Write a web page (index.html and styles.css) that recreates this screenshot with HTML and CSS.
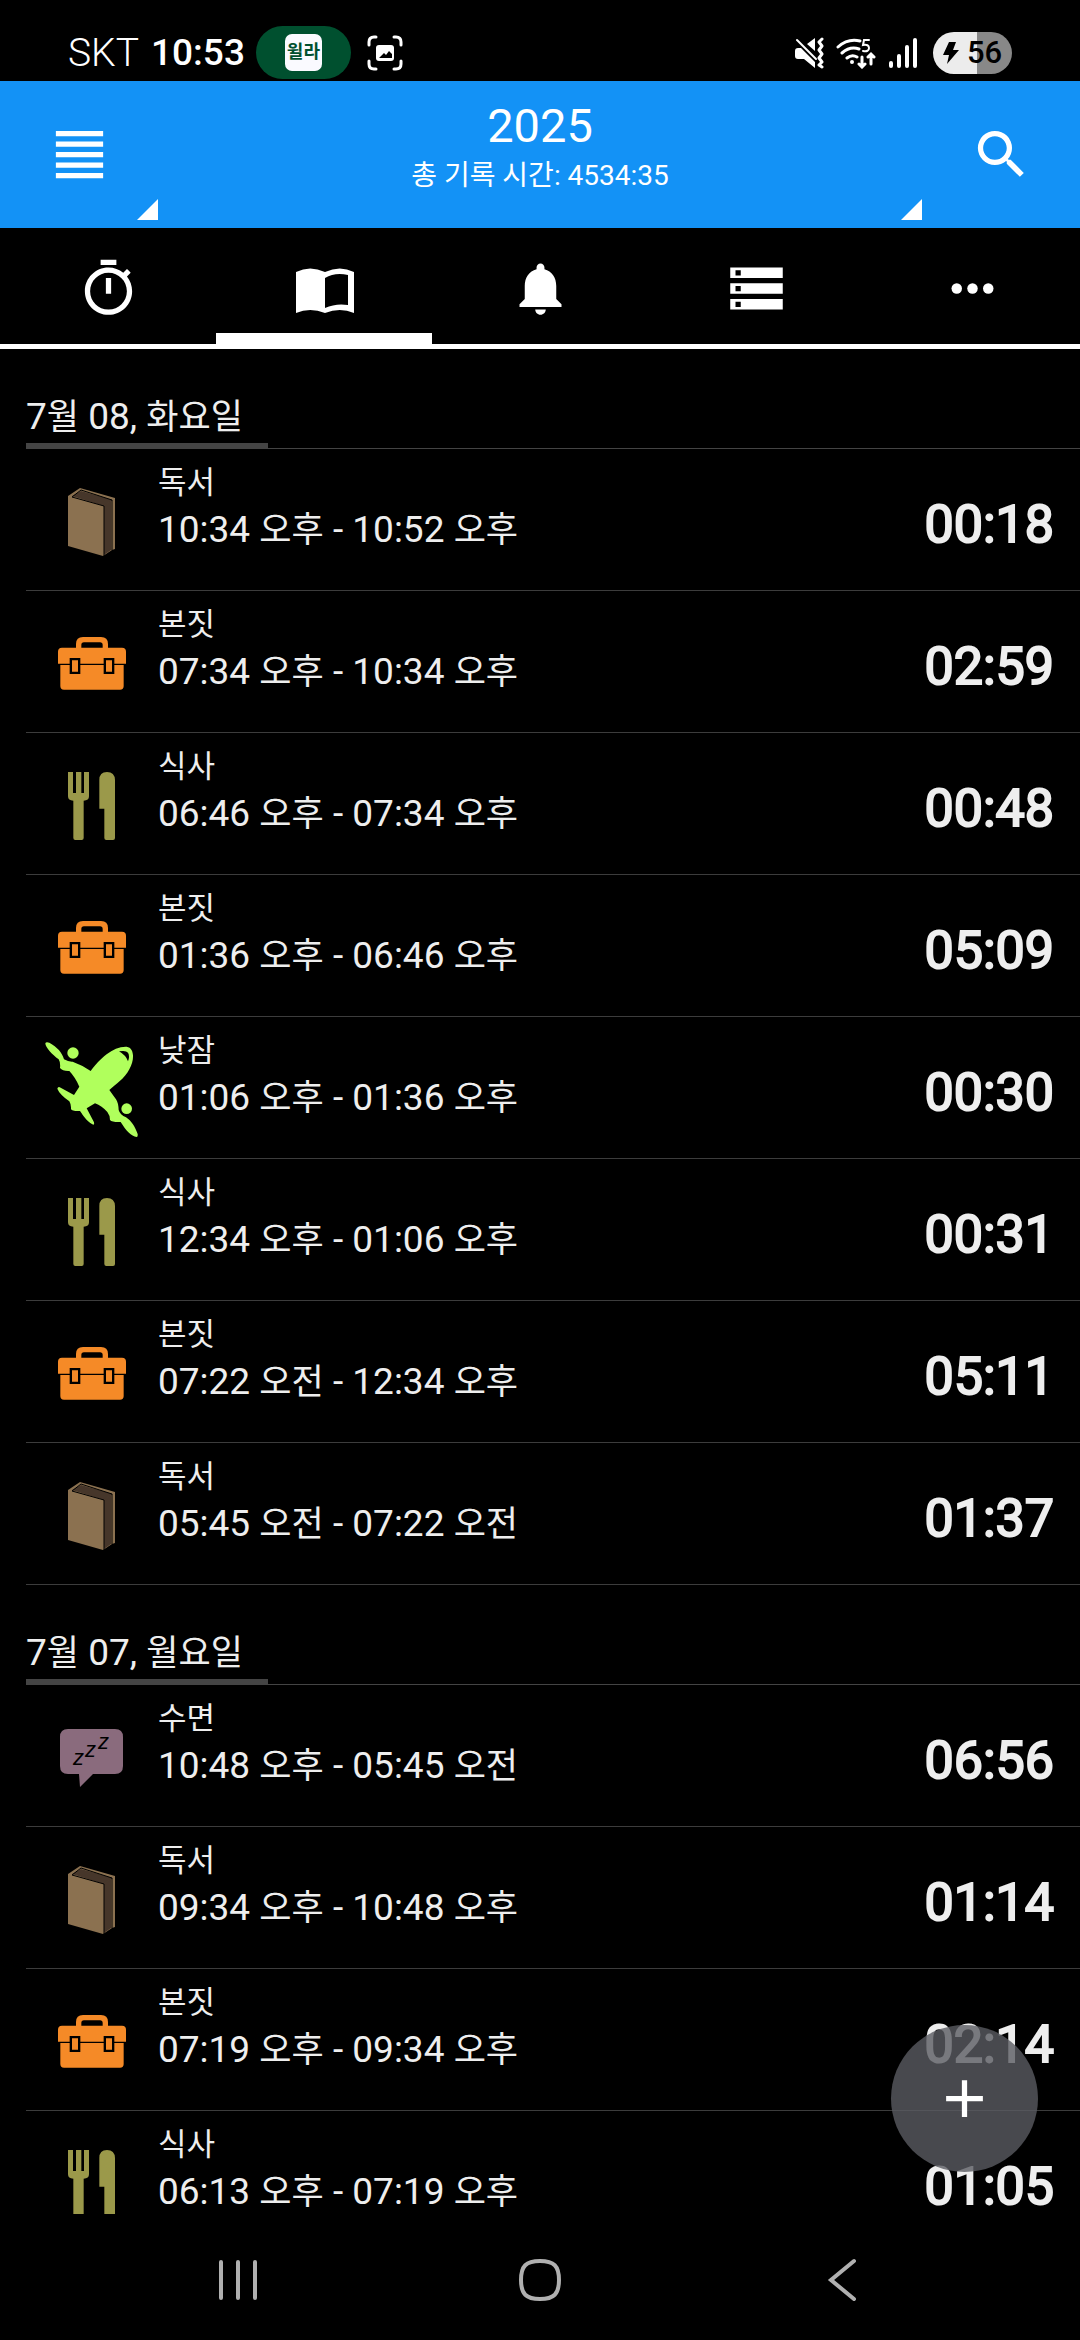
FILE: index.html
```html
<!DOCTYPE html>
<html lang="ko">
<head>
<meta charset="utf-8">
<meta name="viewport" content="width=device-width, initial-scale=1">
<title>2025</title>
<link rel="stylesheet" href="styles.css">
</head>
<body>
<svg class="sprite" aria-hidden="true">
  <symbol id="book" viewBox="0 0 96 96">
    <path fill="#8b7150" d="M24 22 36 14 71 24V75L68 76 59 82 24 72Z"/>
    <path fill="#46362a" d="M28 22 37 17 69 26 60 32Z"/>
    <path fill="#46362a" d="M60 31 67 27V76L60 81Z"/>
    <path fill="none" stroke="#000" stroke-width="1" d="M28 23 37 16 68 26V76M28 23 60 32V82"/>
  </symbol>
  <symbol id="toolbox" viewBox="72 78 288 288">
    <path fill="#f58a27" fill-rule="evenodd" d="M168 173V162Q168 141 189 141H243Q264 141 264 162V173H306Q318 173 318 185V221H114V185Q114 173 126 173ZM184 173H248V165Q248 157 240 157H192Q184 157 184 165Z"/>
    <path fill="#f58a27" d="M121 225H311V288Q311 299 300 299H132Q121 299 121 288Z"/>
    <path fill="#000" d="M149 204H181V252H149ZM251 204H283V252H251Z"/>
    <path fill="#f58a27" d="M156 211H174V245H156ZM258 211H276V245H258Z"/>
  </symbol>
  <symbol id="cutlery" viewBox="72 504 288 288">
    <path fill="#9b994a" d="M144 546H159V609H168V546H184V609H192V546H207V619Q207 632 191 632V744Q191 750 185 750H166Q160 750 160 744V632Q144 632 144 619Z"/>
    <path fill="#9b994a" d="M238 656V570Q238 546 261 546T285 570V744Q285 750 279 750H259Q253 750 253 744V656Z"/>
  </symbol>
  <symbol id="plane" viewBox="72 96 288 288">
    <path fill="#b0ff5c" d="M212 183C240 145 280 108 320 110C344 114 344 150 328 178C315 205 285 225 268 240L288 268Q295 278 296 300Q300 315 318 322C334 332 346 352 353 372Q354 381 350 381C334 379 318 362 302 336Q276 337 270 330Q270 316 262 306Q246 288 225 280L200 295L222 337Q224 347 217 343C200 333 190 318 180 303Q156 304 153 297Q154 284 148 274Q118 252 112 236Q114 228 122 233L162 255L178 230Q166 202 148 183Q128 184 120 174Q122 158 116 148C96 134 76 112 76 100Q78 94 88 98C112 112 126 126 132 148Q146 156 158 155Q184 164 212 183Z"/>
    <circle cx="159" cy="129" r="17" fill="#b0ff5c"/>
    <circle cx="320" cy="296" r="16" fill="#b0ff5c"/>
    <path fill="#000" d="M297 124Q318 120 324 128Q330 138 324 154Q318 136 297 124Z"/>
  </symbol>
</svg>

<div class="status">
  <div class="status-group">
    <span class="carrier">SKT</span>
    <time class="clock">10:53</time>
    <span class="pill"><span class="pill-app">윌라</span></span>
    <svg class="capture" viewBox="0 0 36 36" width="36" height="36" aria-hidden="true">
      <path fill="none" stroke="#fff" stroke-width="3" stroke-linecap="round" d="M2 10V7Q2 2 7 2H9M27 2H29Q34 2 34 7V10M34 26V29Q34 34 29 34H27M9 34H7Q2 34 2 29V26"/>
      <rect x="9" y="10" width="18" height="16" rx="3" fill="#fff"/>
      <path d="M12 23 17 18 19 20 22 16 25 19V23Z"/>
    </svg>
  </div>
  <div class="status-group status-right">
    <svg viewBox="0 0 30 32" width="30" height="32" aria-hidden="true">
      <path fill="#fff" d="M1 14Q1 11 4 11L7 11 21 25V31L10 22H4Q1 22 1 19ZM13 7 21 1V14Z"/>
      <path fill="none" stroke="#fff" stroke-width="2" stroke-linecap="round" d="M3 3 22 22"/>
      <path fill="none" stroke="#fff" stroke-width="3" stroke-linecap="round" stroke-linejoin="round" d="M28 2 25 5 28 9 25 13 28 17 25 21 28 25 25 28 28 30"/>
    </svg>
    <svg viewBox="0 0 40 32" width="40" height="32" aria-hidden="true">
      <g fill="none" stroke="#fff" stroke-width="3" stroke-linecap="round">
        <path d="M2 10Q12 1 24 4M6 16Q14 9 23 12M11 21Q16 17 21 20"/>
        <path stroke-width="2" d="M33 3H28L27 8Q33 7 33 11T27 14"/>
        <path d="M26 20V29M23 27 26 30 29 27M35 27V18M32 20 35 17 38 20"/>
      </g>
      <circle cx="16" cy="25" r="2" fill="#fff"/>
    </svg>
    <svg class="signal" viewBox="0 0 30 32" width="30" height="32" aria-hidden="true">
      <path fill="none" stroke="#fff" stroke-width="4" stroke-linecap="round" d="M3 26V29M11 19V29M19 10V29M27 3V29"/>
    </svg>
    <span class="battery">
      <svg viewBox="0 0 16 22" width="16" height="22" aria-hidden="true"><path d="M6 0H13L10 8H16L4 22 6 13H0Z"/></svg>56
    </span>
  </div>
</div>

<header class="appbar">
  <button class="bar-button corner" type="button" aria-label="메뉴">
    <svg class="icon" viewBox="0 0 24 24"><path d="M3 3h18v2H3zM3 7h18v2H3zM3 11h18v2H3zM3 15h18v2H3zM3 19h18v2H3z"/></svg>
  </button>
  <button class="period corner" type="button">
    <span class="period-title">2025</span>
    <span class="period-total">총 기록 시간: 4534:35</span>
  </button>
  <button class="bar-button" type="button" aria-label="검색">
    <svg class="icon" viewBox="0 0 24 24"><path d="M15.500 14h-.79l-.28-.27A6.470 6.470 0 0 0 16 9.500 6.500 6.500 0 1 0 9.500 16c1.610 0 3.090-.59 4.230-1.570l.27.28v.79l5 4.990L20.490 19l-4.990-5zm-6 0C7.010 14 5 11.990 5 9.500S7.010 5 9.500 5 14 7.010 14 9.500 11.990 14 9.500 14z"/></svg>
  </button>
</header>

<nav class="tabs">
  <button class="tab" type="button" aria-label="타이머"><svg class="icon" viewBox="0 0 24 24"><path d="M15 1H9v2h6V1zm-4 13h2V8h-2v6zm8.030-6.610l1.420-1.420c-.43-.51-.9-.99-1.410-1.410l-1.420 1.420C16.070 4.740 14.120 4 12 4c-4.970 0-9 4.030-9 9s4.020 9 9 9 9-4.030 9-9c0-2.120-.74-4.070-1.970-5.610zM12 20c-3.870 0-7-3.130-7-7s3.130-7 7-7 7 3.130 7 7-3.130 7-7 7z"/></svg></button>
  <button class="tab tab-active" type="button" aria-label="기록" aria-current="page"><svg class="icon" viewBox="0 0 63 63"><path fill-rule="evenodd" d="M3 15Q17 8 32 15 47 8 61 15V56Q47 50 32 56 17 50 3 56ZM32 21V51Q43 46 55 48V18Q42 15 32 21Z"/></svg></button>
  <button class="tab" type="button" aria-label="알림"><svg class="icon" viewBox="0 0 24 24"><path d="M12 22c1.100 0 2-.9 2-2h-4c0 1.100.89 2 2 2zm6-6v-5c0-3.070-1.640-5.640-4.500-6.320V4c0-.83-.67-1.500-1.500-1.500s-1.500.67-1.500 1.500v.68C7.630 5.360 6 7.920 6 11v5l-2 2v1h16v-1l-2-2z"/></svg></button>
  <button class="tab" type="button" aria-label="목록"><svg class="icon" viewBox="0 0 24 24"><path d="M2 20h20v-4H2v4zm2-3h2v2H4v-2zM2 4v4h20V4H2zm4 3H4V5h2v2zm-4 7h20v-4H2v4zm2-3h2v2H4v-2z"/></svg></button>
  <button class="tab" type="button" aria-label="더보기"><svg class="icon" viewBox="0 0 24 24"><circle cx="6" cy="12" r="2"/><circle cx="12" cy="12" r="2"/><circle cx="18" cy="12" r="2"/></svg></button>
</nav>

<main class="content">
  <div class="log">
    <section>
      <h2 class="day"><span class="day-label">7<span class="ko">월</span> 08, <span class="ko">화요일</span></span></h2>
      <ul class="entries">
        <li class="entry"><svg class="entry-icon"><use href="#book"/></svg><div class="entry-text"><p class="entry-name">독서</p><p class="entry-range">10:34 <span class="ko">오후</span> - 10:52 <span class="ko">오후</span></p></div><span class="duration">00:18</span></li>
        <li class="entry"><svg class="entry-icon"><use href="#toolbox"/></svg><div class="entry-text"><p class="entry-name">본짓</p><p class="entry-range">07:34 <span class="ko">오후</span> - 10:34 <span class="ko">오후</span></p></div><span class="duration">02:59</span></li>
        <li class="entry"><svg class="entry-icon"><use href="#cutlery"/></svg><div class="entry-text"><p class="entry-name">식사</p><p class="entry-range">06:46 <span class="ko">오후</span> - 07:34 <span class="ko">오후</span></p></div><span class="duration">00:48</span></li>
        <li class="entry"><svg class="entry-icon"><use href="#toolbox"/></svg><div class="entry-text"><p class="entry-name">본짓</p><p class="entry-range">01:36 <span class="ko">오후</span> - 06:46 <span class="ko">오후</span></p></div><span class="duration">05:09</span></li>
        <li class="entry"><svg class="entry-icon"><use href="#plane"/></svg><div class="entry-text"><p class="entry-name">낮잠</p><p class="entry-range">01:06 <span class="ko">오후</span> - 01:36 <span class="ko">오후</span></p></div><span class="duration">00:30</span></li>
        <li class="entry"><svg class="entry-icon"><use href="#cutlery"/></svg><div class="entry-text"><p class="entry-name">식사</p><p class="entry-range">12:34 <span class="ko">오후</span> - 01:06 <span class="ko">오후</span></p></div><span class="duration">00:31</span></li>
        <li class="entry"><svg class="entry-icon"><use href="#toolbox"/></svg><div class="entry-text"><p class="entry-name">본짓</p><p class="entry-range">07:22 <span class="ko">오전</span> - 12:34 <span class="ko">오후</span></p></div><span class="duration">05:11</span></li>
        <li class="entry"><svg class="entry-icon"><use href="#book"/></svg><div class="entry-text"><p class="entry-name">독서</p><p class="entry-range">05:45 <span class="ko">오전</span> - 07:22 <span class="ko">오전</span></p></div><span class="duration">01:37</span></li>
      </ul>
    </section>
    <section>
      <h2 class="day"><span class="day-label">7<span class="ko">월</span> 07, <span class="ko">월요일</span></span></h2>
      <ul class="entries">
        <li class="entry"><svg class="entry-icon" viewBox="0 0 96 96"><path fill="#8a6b7d" d="M24 19H71Q79 19 79 27V56Q79 64 71 64H49L36 77 35 64H24Q16 64 16 56V27Q16 19 24 19Z"/><g class="zzz"><text x="29" y="55">z</text><text x="41" y="47">z</text><text x="54" y="39">z</text></g></svg><div class="entry-text"><p class="entry-name">수면</p><p class="entry-range">10:48 <span class="ko">오후</span> - 05:45 <span class="ko">오전</span></p></div><span class="duration">06:56</span></li>
        <li class="entry"><svg class="entry-icon"><use href="#book"/></svg><div class="entry-text"><p class="entry-name">독서</p><p class="entry-range">09:34 <span class="ko">오후</span> - 10:48 <span class="ko">오후</span></p></div><span class="duration">01:14</span></li>
        <li class="entry"><svg class="entry-icon"><use href="#toolbox"/></svg><div class="entry-text"><p class="entry-name">본짓</p><p class="entry-range">07:19 <span class="ko">오후</span> - 09:34 <span class="ko">오후</span></p></div><span class="duration">02:14</span></li>
        <li class="entry"><svg class="entry-icon"><use href="#cutlery"/></svg><div class="entry-text"><p class="entry-name">식사</p><p class="entry-range">06:13 <span class="ko">오후</span> - 07:19 <span class="ko">오후</span></p></div><span class="duration">01:05</span></li>
      </ul>
    </section>
  </div>
  <button class="fab" type="button" aria-label="추가"><svg class="icon" viewBox="0 0 24 24"><path d="M19 13h-6v6h-2v-6H5v-2h6V5h2v6h6v2z"/></svg></button>
</main>

<nav class="sysnav">
  <button class="sysnav-button" type="button" aria-label="최근 앱"><svg viewBox="0 0 44 44"><path d="M5 4V40M22 4V40M39 4V40"/></svg></button>
  <button class="sysnav-button" type="button" aria-label="홈"><svg viewBox="0 0 44 44"><path d="M22 3C36 3 41 8 41 22S36 41 22 41 3 36 3 22 8 3 22 3Z"/></svg></button>
  <button class="sysnav-button" type="button" aria-label="뒤로"><svg viewBox="0 0 44 44"><path d="M34 3 11 22 34 41"/></svg></button>
</nav>
</body>
</html>
```

FILE: styles.css
```css
* {
  box-sizing: border-box;
}

body {
  margin: 0;
  height: 100vh;
  display: flex;
  flex-direction: column;
  background: #000;
  color: #eee;
  font-family: Roboto, "Noto Sans CJK KR", sans-serif;
}

button {
  margin: 0;
  padding: 0;
  border: 0;
  background: none;
  color: #fff;
  font: inherit;
}

h2,
p,
ul {
  margin: 0;
  padding: 0;
  font-weight: 400;
  list-style: none;
}

.sprite {
  position: absolute;
  width: 0;
  height: 0;
}

.zzz {
  font: italic 22px "Liberation Sans", sans-serif;
}

.icon {
  display: block;
  width: 63px;
  height: 63px;
  fill: #fff;
}

/* Hangul beside Latin digits, set a little smaller to even out the line */
.ko {
  font-size: 35px;
}

/* Status bar */
.status {
  flex: none;
  display: flex;
  justify-content: space-between;
  height: 81px;
  padding: 24px 68px 0;
  color: #fff;
}

.status-group {
  display: flex;
  align-items: center;
  height: 57px;
}

.carrier {
  font-size: 39px;
  font-weight: 300;
}

.clock {
  margin-left: 12px;
  font-size: 37px;
  font-weight: 500;
}

.pill {
  display: flex;
  align-items: center;
  justify-content: center;
  width: 95px;
  height: 53px;
  margin-left: 11px;
  border-radius: 27px;
  background: #00502f;
}

.pill-app {
  width: 37px;
  height: 37px;
  border-radius: 7px;
  background: #fafaff;
  color: #00502f;
  font-size: 18px;
  font-weight: 700;
  line-height: 36px;
  text-align: center;
}

.capture {
  margin-left: 16px;
}

.status-right {
  gap: 12px;
}

.battery {
  display: flex;
  align-items: center;
  gap: 8px;
  width: 79px;
  height: 42px;
  margin-left: 3px;
  padding-left: 10px;
  border-radius: 21px;
  background: linear-gradient(90deg, #ececec 56%, #888 56%);
  color: #000;
  font-size: 31px;
  font-weight: 500;
}

/* App bar */
.appbar {
  flex: none;
  display: flex;
  height: 147px;
  background: #1392f6;
}

.bar-button {
  display: flex;
  align-items: center;
  justify-content: center;
  width: 158px;
}

.corner {
  position: relative;
}

.corner::after {
  content: "";
  position: absolute;
  right: 0;
  bottom: 8px;
  width: 21px;
  height: 21px;
  background: #fff;
  clip-path: polygon(100% 0, 100% 100%, 0 100%);
}

.period {
  flex: 1;
  display: flex;
  flex-direction: column;
  align-items: center;
  padding-top: 17px;
}

.period-title {
  font-size: 47px;
  line-height: 56px;
}

.period-total {
  font-size: 28px;
  line-height: 44px;
}

/* Tabs */
.tabs {
  flex: none;
  display: flex;
  height: 121px;
}

.tab {
  flex: 1;
  display: flex;
  align-items: center;
  justify-content: center;
  box-shadow: inset 0 -5px #fff;
}

.tab-active {
  box-shadow: inset 0 -16px #fff;
}

/* Log */
.content {
  position: relative;
  flex: 1;
  min-height: 0;
}

.log {
  height: 100%;
  padding-left: 26px;
  overflow: hidden;
}

.day {
  display: flex;
  align-items: flex-end;
  height: 100px;
  box-shadow: inset 0 -1px #444;
  font-size: 37px;
  line-height: 50px;
}

.day-label {
  min-width: 242px;
  border-bottom: 6px solid #444;
}

.entry {
  display: flex;
  height: 142px;
  padding: 0 26px 0 18px;
  border-bottom: 1px solid #3c3c3c;
}

.entry-icon {
  width: 96px;
  height: 96px;
  margin-top: 25px;
}

.entry-text {
  flex: 1;
  padding: 14px 0 0 18px;
}

.entry-name {
  font-size: 31px;
  line-height: 40px;
}

.entry-range {
  font-size: 37px;
  line-height: 54px;
}

.duration {
  padding-top: 44px;
  font-size: 52px;
  line-height: 64px;
  -webkit-text-stroke: 2px;
}

.fab {
  position: absolute;
  right: 42px;
  bottom: 42px;
  display: flex;
  align-items: center;
  justify-content: center;
  width: 147px;
  height: 147px;
  border-radius: 50%;
  background: rgba(90, 91, 97, 0.8);
}

/* System navigation */
.sysnav {
  flex: none;
  display: flex;
  height: 126px;
  padding: 6px 87px 0;
}

.sysnav-button {
  flex: 1;
  display: flex;
  align-items: center;
  justify-content: center;
}

.sysnav-button svg {
  width: 44px;
  height: 44px;
  fill: none;
  stroke: #b0b0b0;
  stroke-width: 4;
  stroke-linecap: round;
}
```
